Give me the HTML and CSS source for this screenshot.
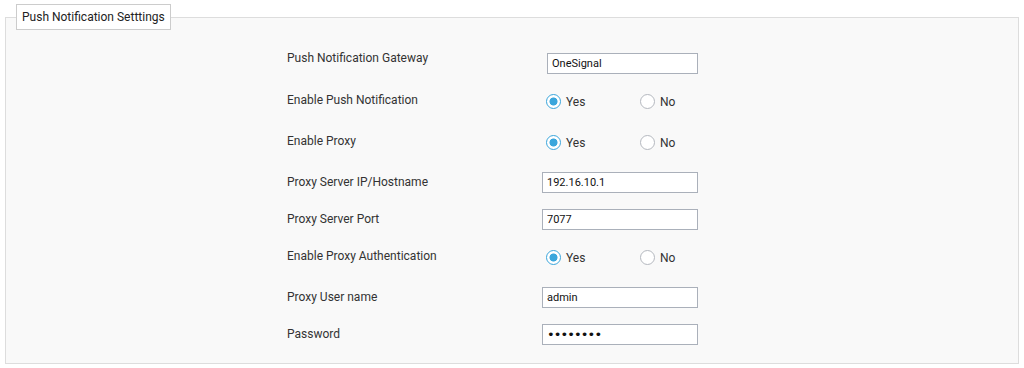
FILE: index.html
```html
<!DOCTYPE html>
<html>
<head>
<meta charset="utf-8">
<link rel="stylesheet" href="styles.css">
</head>
<body>
<fieldset class="panel">
  <legend class="panel-title">Push Notification Setttings</legend>
  <div class="form">
    <div class="row row-42">
      <div class="label">Push Notification Gateway</div>
      <div class="field"><input class="text-input gateway" type="text" value="OneSignal"></div>
    </div>
    <div class="row row-41">
      <div class="label">Enable Push Notification</div>
      <div class="field radios">
        <label class="option"><input class="radio" type="radio" name="push" checked><span>Yes</span></label>
        <label class="option"><input class="radio" type="radio" name="push"><span>No</span></label>
      </div>
    </div>
    <div class="row row-41">
      <div class="label">Enable Proxy</div>
      <div class="field radios">
        <label class="option"><input class="radio" type="radio" name="proxy" checked><span>Yes</span></label>
        <label class="option"><input class="radio" type="radio" name="proxy"><span>No</span></label>
      </div>
    </div>
    <div class="row row-37">
      <div class="label">Proxy Server IP/Hostname</div>
      <div class="field"><input class="text-input" type="text" value="192.16.10.1"></div>
    </div>
    <div class="row row-37">
      <div class="label">Proxy Server Port</div>
      <div class="field"><input class="text-input" type="text" value="7077"></div>
    </div>
    <div class="row row-41">
      <div class="label">Enable Proxy Authentication</div>
      <div class="field radios">
        <label class="option"><input class="radio" type="radio" name="auth" checked><span>Yes</span></label>
        <label class="option"><input class="radio" type="radio" name="auth"><span>No</span></label>
      </div>
    </div>
    <div class="row row-37">
      <div class="label">Proxy User name</div>
      <div class="field"><input class="text-input" type="text" value="admin"></div>
    </div>
    <div class="row row-last">
      <div class="label">Password</div>
      <div class="field"><input class="text-input password" type="password" value="password"></div>
    </div>
  </div>
</fieldset>
</body>
</html>
```
FILE: styles.css
```css
html, body {
  margin: 0;
  padding: 0;
  background: #ffffff;
}
body {
  padding: 4px 5px 0 5px;
  font-family: Roboto, "Liberation Sans", Arial, sans-serif;
  font-size: 12px;
  color: #333333;
}
.panel {
  margin: 0;
  padding: 18px 10px 18px 10px;
  border: 1px solid #dddddd;
  background: #f9f9f9;
  min-width: 0;
}
.panel-title {
  padding: 0 5px;
  height: 24px;
  line-height: 24px;
  box-sizing: content-box;
  border: 1px solid #cccccc;
  background: #ffffff;
  font-size: 12px;
  color: #222222;
}
.form {
  padding-left: 271px;
}
.row {
  display: flex;
  align-items: flex-start;
}
.row-42 { height: 42px; }
.row-41 { height: 41px; }
.row-37 { height: 37px; }
.row-last { height: 21px; }
.label {
  width: 255px;
  flex: none;
  line-height: 21px;
  height: 21px;
  white-space: nowrap;
}
.field {
  display: flex;
  align-items: center;
}
.text-input {
  box-sizing: border-box;
  width: 156px;
  height: 21px;
  margin: 0;
  padding: 0 4px;
  border: 1px solid #aab0ba;
  border-radius: 0;
  background: #ffffff;
  font-family: Roboto, "Liberation Sans", Arial, sans-serif;
  font-size: 11px;
  color: #111111;
  outline: none;
}
.text-input.gateway {
  width: 151px;
  margin: 5px 0 0 5px;
}
.text-input.password {
  font-family: "DejaVu Sans", sans-serif;
  font-size: 13px;
  letter-spacing: -0.9px;
}
.radios {
  padding-top: 2px;
  padding-left: 4px;
  height: 19px;
}
.option {
  display: inline-flex;
  align-items: center;
  width: 94px;
  font-size: 12px;
  color: #333333;
}
.option span {
  margin-left: 5px;
}
.radio {
  -webkit-appearance: none;
  appearance: none;
  box-sizing: border-box;
  width: 15px;
  height: 15px;
  margin: 0;
  border: 1px solid #b4b8bf;
  border-radius: 50%;
  background: #ffffff;
}
.radio:checked {
  border-color: #3aa6dc;
  background: radial-gradient(circle, #3aa6dc 0, #3aa6dc 3.6px, #ffffff 4.4px);
}
```
